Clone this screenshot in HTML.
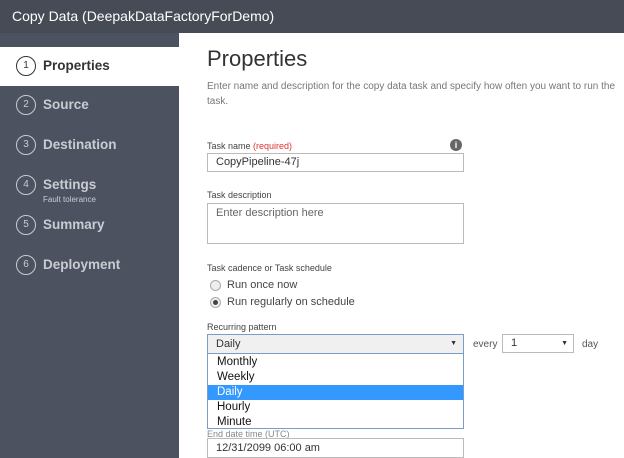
<!DOCTYPE html>
<html><head><style>
body{margin:0;width:624px;height:458px;overflow:hidden;font-family:"Liberation Sans",sans-serif;background:#fff;position:relative}
.a{position:absolute}
.hdr{left:0;top:0;width:624px;height:33px;background:#474b56;color:#fff;font-size:14px;line-height:33px;padding-left:12px;box-sizing:border-box}
.side{left:0;top:33px;width:179px;height:425px;background:#4c5260}
.act{left:0;top:47px;width:179px;height:39px;background:#fff}
.it{left:16px;height:20px;line-height:20px;color:#c9ccd3;font-size:13.5px;font-weight:bold}
.c{display:inline-block;width:18px;height:18px;border:1.5px solid #c9ccd3;border-radius:50%;text-align:center;line-height:18px;font-size:10px;font-weight:normal;vertical-align:middle;margin-right:7px}
.lbl{font-size:9px;color:#444}
.inp{border:1px solid #bbb;background:#fff;font-size:11px;color:#333;box-sizing:border-box;padding-left:8px}
</style></head><body>
<div class="a hdr">Copy Data (DeepakDataFactoryForDemo)</div>
<div class="a side"></div>
<div class="a act"></div>
<div class="a it" style="top:56px;color:#333"><span class="c" style="border-color:#333">1</span>Properties</div>
<div class="a it" style="top:95px"><span class="c">2</span>Source</div>
<div class="a it" style="top:135px"><span class="c">3</span>Destination</div>
<div class="a it" style="top:175px"><span class="c">4</span>Settings</div>
<div class="a" style="left:43px;top:195px;font-size:8px;color:#c9ccd3">Fault tolerance</div>
<div class="a it" style="top:215px"><span class="c">5</span>Summary</div>
<div class="a it" style="top:255px"><span class="c">6</span>Deployment</div>

<div class="a" style="left:207px;top:46px;font-size:22px;color:#333">Properties</div>
<div class="a" style="left:207px;top:79px;width:410px;font-size:10px;line-height:15px;color:#777">Enter name and description for the copy data task and specify how often you want to run the task.</div>
<div class="a lbl" style="left:207px;top:141px">Task name <span style="color:#d33">(required)</span></div>
<div class="a" style="left:450px;top:139px;width:12px;height:12px;border-radius:50%;background:#666;color:#fff;font-size:9px;text-align:center;line-height:12px;font-weight:bold">i</div>
<div class="a inp" style="left:207px;top:153px;width:257px;height:19px;line-height:17px">CopyPipeline-47j</div>
<div class="a lbl" style="left:207px;top:190px">Task description</div>
<div class="a inp" style="left:207px;top:203px;width:257px;height:41px;padding-top:3px;color:#666">Enter description here</div>
<div class="a lbl" style="left:207px;top:263px">Task cadence or Task schedule</div>
<div class="a" style="left:210px;top:280px;width:9px;height:9px;border:1px solid #aaa;border-radius:50%;background:#eee"></div>
<div class="a" style="left:227px;top:279px;font-size:11px;color:#444">Run once now</div>
<div class="a" style="left:210px;top:297px;width:9px;height:9px;border:1px solid #aaa;border-radius:50%;background:#eee"></div>
<div class="a" style="left:213px;top:300px;width:5px;height:5px;border-radius:50%;background:#444"></div>
<div class="a" style="left:227px;top:296px;font-size:11px;color:#444">Run regularly on schedule</div>
<div class="a lbl" style="left:207px;top:322px">Recurring pattern</div>
<div class="a inp" style="left:207px;top:334px;width:257px;height:20px;line-height:18px;background:#f0f0f0;border-color:#7a9cc8">Daily<span style="position:absolute;right:6px;font-size:7px">▼</span></div>
<div class="a" style="left:207px;top:353px;width:257px;height:76px;border:1px solid #7a9cc8;background:#fff;box-sizing:border-box;font-size:11.5px;color:#111;line-height:15px;padding-top:1px">
<div style="padding-left:9px">Monthly</div><div style="padding-left:9px">Weekly</div><div style="padding-left:9px;background:#3399ff;color:#fff">Daily</div><div style="padding-left:9px">Hourly</div><div style="padding-left:9px">Minute</div></div>
<div class="a" style="left:473px;top:339px;font-size:10px;color:#555">every</div>
<div class="a inp" style="left:502px;top:334px;width:72px;height:19px;line-height:17px">1<span style="position:absolute;right:5px;font-size:7px">▼</span></div>
<div class="a" style="left:582px;top:339px;font-size:10px;color:#555">day</div>
<div class="a lbl" style="left:207px;top:429px;color:#888">End date time (UTC)</div>
<div class="a inp" style="left:207px;top:438px;width:257px;height:20px;line-height:18px">12/31/2099 06:00 am</div>
</body></html>
